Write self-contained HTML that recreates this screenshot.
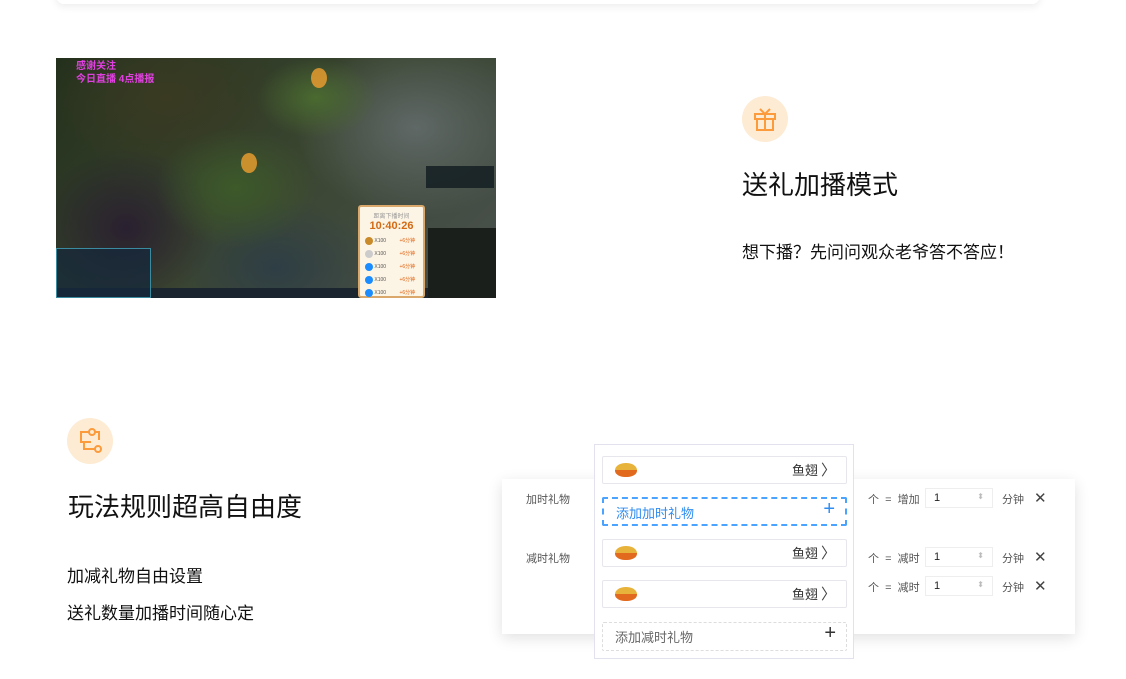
<!DOCTYPE html>
<html><head><meta charset="utf-8"><style>
*{margin:0;padding:0;box-sizing:border-box}
body{width:1126px;height:679px;background:#fff;position:relative;overflow:hidden;font-family:"Liberation Sans","Noto Sans CJK SC",sans-serif;color:#111}
.a{position:absolute}
.topcard{left:56px;top:-20px;width:984px;height:24px;background:#fff;box-shadow:0 3px 8px rgba(0,0,0,.07);border-radius:0 0 8px 8px}
.icon{width:46px;height:46px;border-radius:50%;background:#fdebd3}
.h{font-size:26px;color:#111}
.p{font-size:17px;color:#111}
.game{left:56px;top:58px;width:440px;height:240px;overflow:hidden;background:
radial-gradient(ellipse 60px 40px at 260px 40px,#4a6a30,transparent),
radial-gradient(ellipse 80px 60px at 180px 130px,#3d5a2a,transparent),
radial-gradient(ellipse 120px 90px at 360px 70px,#5f6866,transparent),
radial-gradient(ellipse 90px 80px at 70px 170px,#2a2030,transparent),
radial-gradient(ellipse 100px 70px at 220px 210px,#2e3e45,transparent),
radial-gradient(ellipse 120px 80px at 110px 40px,#3a3a22,transparent),
linear-gradient(135deg,#23301c,#3a4530 50%,#4a5250)}
.card{left:502px;top:479px;width:573px;height:155px;background:#fff;box-shadow:0 4px 14px rgba(0,0,0,.12)}
.dd{left:594px;top:444px;width:260px;height:215px;background:#fff;border:1px solid #e2e2ee}
.row{position:absolute;left:7px;width:245px;height:28px;border:1px solid #e6e6ec;border-radius:2px}
.gift{position:absolute;left:12px;top:6px;width:22px;height:14px;border-radius:50% 50% 45% 45%;background:linear-gradient(#e8b33a 50%,#e26a1f 50%)}
.nm{position:absolute;right:28px;top:3px;font-size:13px;color:#333}
.chev{position:absolute;right:10px;top:2px;font-size:15px;color:#444}
.dash{position:absolute;left:7px;width:245px;height:29px;border-radius:2px;font-size:13px;padding:4px 12px}
.plus{position:absolute;right:10px;top:-1px;font-size:20px}
.sm{font-size:11px;color:#555}
.inp{width:68px;height:20px;border:1px solid #eee;font-size:11px;padding:3px 8px;color:#222}
</style></head><body>
<div class="a topcard"></div>

<div class="a game">
 <div class="a" style="left:20px;top:2px;color:#e040e0;font-size:10px;font-weight:bold;line-height:13px">感谢关注<br>今日直播 4点播报</div>
 <div class="a" style="left:255px;top:10px;width:16px;height:20px;border-radius:50%;background:#f0a030;opacity:.8"></div>
 <div class="a" style="left:185px;top:95px;width:16px;height:20px;border-radius:50%;background:#f0a030;opacity:.8"></div>
 <div class="a" style="left:0;top:230px;width:440px;height:10px;background:#1a2530"></div>
 <div class="a" style="left:0;top:190px;width:95px;height:50px;background:rgba(20,40,60,.7);border:1px solid #3a8aa0"></div>
 <div class="a" style="left:370px;top:108px;width:68px;height:22px;background:rgba(20,30,35,.85)"></div>
 <div class="a" style="left:372px;top:170px;width:68px;height:70px;background:#1a1f1c"></div>
 <div class="a" style="left:302px;top:147px;width:67px;height:93px;background:#fcf4e4;border:2px solid #d9a86a;border-radius:3px">
  <div style="font-size:6px;color:#999;text-align:center;margin-top:4px">距离下播时间</div>
  <div style="font-size:11px;font-weight:bold;color:#d36a14;text-align:center">10:40:26</div>
  <div style="margin:3px 0 0 5px;line-height:13px;font-size:5px;color:#555">
   <div><span style="display:inline-block;width:8px;height:8px;border-radius:50%;background:#c98a2a;vertical-align:middle"></span> X100 <span style="color:#e06010;margin-left:12px">+6分钟</span></div>
   <div><span style="display:inline-block;width:8px;height:8px;border-radius:50%;background:#ccc;vertical-align:middle"></span> X100 <span style="color:#e06010;margin-left:12px">+6分钟</span></div>
   <div><span style="display:inline-block;width:8px;height:8px;border-radius:50%;background:#1a8cff;vertical-align:middle"></span> X100 <span style="color:#e06010;margin-left:12px">+6分钟</span></div>
   <div><span style="display:inline-block;width:8px;height:8px;border-radius:50%;background:#1a8cff;vertical-align:middle"></span> X100 <span style="color:#e06010;margin-left:12px">+6分钟</span></div>
   <div><span style="display:inline-block;width:8px;height:8px;border-radius:50%;background:#1a8cff;vertical-align:middle"></span> X100 <span style="color:#e06010;margin-left:12px">+6分钟</span></div>
  </div>
 </div>
</div>

<div class="a icon" style="left:742px;top:96px">
 <svg width="46" height="46" viewBox="0 0 46 46" fill="none" stroke="#fb9b3c" stroke-width="2"><rect x="13" y="18" width="20" height="5"/><rect x="15" y="23" width="16" height="11"/><path d="M23 18v16M18 13l5 5 5-5"/></svg>
</div>
<div class="a h" style="left:742px;top:165px">送礼加播模式</div>
<div class="a p" style="left:742px;top:238px">想下播？先问问观众老爷答不答应！</div>

<div class="a icon" style="left:67px;top:418px">
 <svg width="46" height="46" viewBox="0 0 46 46" fill="none" stroke="#fb9b3c" stroke-width="2"><path d="M22 14h-8v10h4"/><circle cx="25" cy="14" r="3"/><path d="M28 14h4v8M17 24v7h11"/><circle cx="31" cy="31" r="3"/><path d="M18 24h6"/></svg>
</div>
<div class="a h" style="left:68px;top:487px">玩法规则超高自由度</div>
<div class="a p" style="left:67px;top:562px">加减礼物自由设置</div>
<div class="a p" style="left:67px;top:599px">送礼数量加播时间随心定</div>

<div class="a card">
 <div class="a sm" style="left:24px;top:12px">加时礼物</div>
 <div class="a sm" style="left:24px;top:71px">减时礼物</div>
 <div class="a sm" style="left:366px;top:12px">个 &nbsp;=&nbsp; 增加</div>
 <div class="a inp" style="left:423px;top:9px">1<span style="float:right;color:#bbb;font-size:8px">⬍</span></div>
 <div class="a sm" style="left:500px;top:12px">分钟</div>
 <div class="a" style="left:532px;top:10px;font-size:15px;color:#444">✕</div>
 <div class="a sm" style="left:366px;top:71px">个 &nbsp;=&nbsp; 减时</div>
 <div class="a inp" style="left:423px;top:68px">1<span style="float:right;color:#bbb;font-size:8px">⬍</span></div>
 <div class="a sm" style="left:500px;top:71px">分钟</div>
 <div class="a" style="left:532px;top:69px;font-size:15px;color:#444">✕</div>
 <div class="a sm" style="left:366px;top:100px">个 &nbsp;=&nbsp; 减时</div>
 <div class="a inp" style="left:423px;top:97px">1<span style="float:right;color:#bbb;font-size:8px">⬍</span></div>
 <div class="a sm" style="left:500px;top:100px">分钟</div>
 <div class="a" style="left:532px;top:98px;font-size:15px;color:#444">✕</div>
</div>

<div class="a dd">
 <div class="row" style="top:11px"><div class="gift"></div><div class="nm">鱼翅</div><div class="chev">〉</div></div>
 <div class="dash" style="top:52px;border:2px dashed #4aa3ff;color:#2f8cf0">添加加时礼物<span class="plus" style="color:#2f8cf0">+</span></div>
 <div class="row" style="top:94px"><div class="gift"></div><div class="nm">鱼翅</div><div class="chev">〉</div></div>
 <div class="row" style="top:135px"><div class="gift"></div><div class="nm">鱼翅</div><div class="chev">〉</div></div>
 <div class="dash" style="top:177px;border:1px dashed #ddd;color:#666">添加减时礼物<span class="plus" style="color:#333">+</span></div>
</div>
</body></html>
